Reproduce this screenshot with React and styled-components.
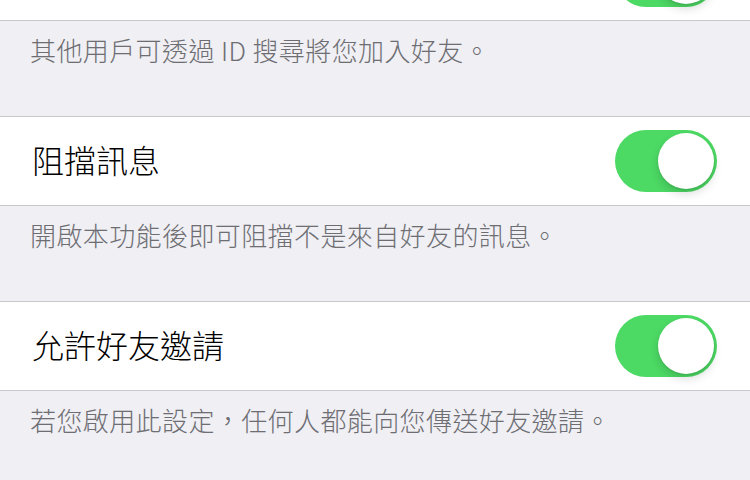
import React, { useState } from 'react';
import styled, { createGlobalStyle } from 'styled-components';

const GlobalStyle = createGlobalStyle`
  html, body {
    margin: 0;
    padding: 0;
    background: #efeff4;
  }

  body {
    font-family: "Noto Sans CJK TC", "Noto Sans", sans-serif;
    -webkit-font-smoothing: antialiased;
  }
`;

const StyledPage = styled.div`
  width: 750px;
  height: 480px;
  overflow: hidden;
  background: #efeff4;
`;

const StyledRow = styled.div`
  display: flex;
  align-items: center;
  justify-content: space-between;
  height: 88px;
  padding: 0 33px 0 32px;
  background: #fff;
  border-top: 1px solid #c8c7cc;
  border-bottom: 1px solid #c8c7cc;

  /* first row is scrolled mostly out of view */
  margin-top: ${({ $clipped }) => ($clipped ? '-69px' : '0')};
`;

const StyledLabel = styled.span`
  font-size: 32px;
  font-weight: 300;
  line-height: 40px;
  margin-bottom: 4px;
  color: #000;
`;

const StyledFooter = styled.p`
  margin: 0;
  height: 95px;
  box-sizing: border-box;
  padding: 13px 30px 0;
  font-size: 26px;
  font-weight: 300;
  line-height: 31px;
  letter-spacing: 0.4px;
  color: #6d6d72;
`;

const StyledSwitch = styled.button`
  position: relative;
  flex: none;
  width: 102px;
  height: 62px;
  padding: 0;
  border: none;
  border-radius: 31px;
  background: ${({ $on }) => ($on ? '#4cd964' : '#e5e5ea')};
  cursor: pointer;
  outline: none;
`;

const StyledKnob = styled.span`
  position: absolute;
  top: 3px;
  left: ${({ $on }) => ($on ? '43px' : '3px')};
  width: 56px;
  height: 56px;
  border-radius: 50%;
  background: #fff;
  box-shadow: 0 5px 10px rgba(0, 0, 0, 0.14), 0 1px 2px rgba(0, 0, 0, 0.1);
`;

const Switch = ({ initial = true }) => {
  const [on, setOn] = useState(initial);
  return (
    <StyledSwitch $on={on} onClick={() => setOn(!on)} aria-pressed={on}>
      <StyledKnob $on={on} />
    </StyledSwitch>
  );
};

const settings = [
  { label: '', note: '其他用戶可透過 ID 搜尋將您加入好友。', clipped: true },
  { label: '阻擋訊息', note: '開啟本功能後即可阻擋不是來自好友的訊息。' },
  { label: '允許好友邀請', note: '若您啟用此設定，任何人都能向您傳送好友邀請。' },
];

export default function App() {
  return (
    <>
      <GlobalStyle />
      <StyledPage>
        {settings.map((s, i) => (
          <section key={i}>
            <StyledRow $clipped={s.clipped}>
              <StyledLabel>{s.label}</StyledLabel>
              <Switch />
            </StyledRow>
            <StyledFooter>{s.note}</StyledFooter>
          </section>
        ))}
      </StyledPage>
    </>
  );
}
